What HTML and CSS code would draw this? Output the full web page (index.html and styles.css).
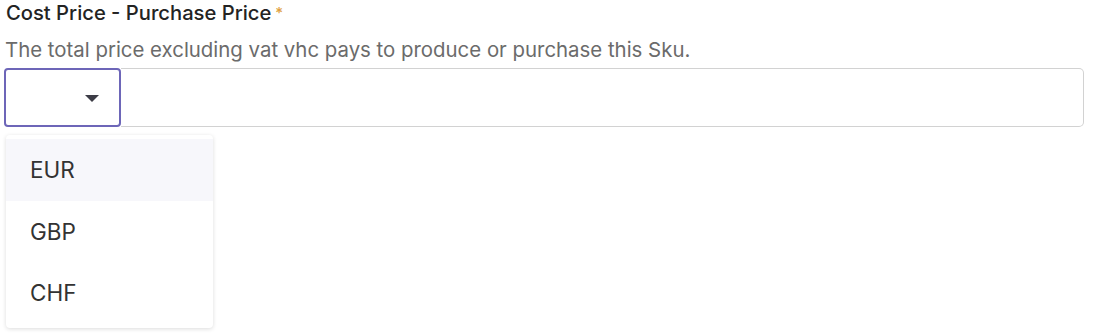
FILE: index.html
```html
<!DOCTYPE html>
<html>
<head>
<meta charset="utf-8">
<link rel="stylesheet" href="styles.css">
</head>
<body>
<div class="field">
  <div class="label">Cost Price - Purchase Price<span class="req">*</span></div>
  <div class="desc">The total price excluding vat vhc pays to produce or purchase this Sku.</div>
  <div class="control">
    <div class="select">
      <svg class="caret" width="14" height="8" viewBox="0 0 14 8"><path d="M0 0 L14 0 L7 7 Z" fill="#3c3c46"/></svg>
    </div>
    <div class="input"></div>
    <div class="menu">
      <div class="opt active">EUR</div>
      <div class="opt">GBP</div>
      <div class="opt">CHF</div>
    </div>
  </div>
</div>
</body>
</html>
```
FILE: styles.css
```css
html, body { margin: 0; padding: 0; background: #fff; }
body { font-family: Inter, "Noto Sans", sans-serif; width: 1100px; height: 334px; overflow: hidden; }
.field { padding: 1px 16px 0 4px; }
.label { font-size: 20.2px; font-weight: 500; color: #232323; line-height: 24px; padding-left: 2px; }
.req { color: #e0a040; font-size: 15px; margin-left: 4px; vertical-align: top; }
.desc { font-size: 20.4px; color: #6b6b6b; line-height: 24px; margin-top: 13px; padding-left: 1px; }
.control { position: relative; display: flex; margin-top: 6px; height: 59px; }
.select { width: 117px; border: 2px solid #6d66b8; border-radius: 4px; display: flex; align-items: center; justify-content: flex-end; padding-right: 20px; box-sizing: border-box; background: #fff; position: relative; z-index: 1; }
.caret { margin-top: 2px; }
.input { flex: 1; border: 1px solid #d2d2d2; border-left: none; border-radius: 0 5px 5px 0; }
.menu { position: absolute; left: 2px; top: 67px; width: 207px; background: #fff; border-radius: 4px; box-shadow: 0 1px 4px rgba(0,0,0,0.14); padding: 4px 0; }
.opt { height: 61.5px; display: flex; align-items: center; padding-left: 24px; font-size: 22.5px; color: #333; }
.opt.active { background: #f7f7fb; }
```
